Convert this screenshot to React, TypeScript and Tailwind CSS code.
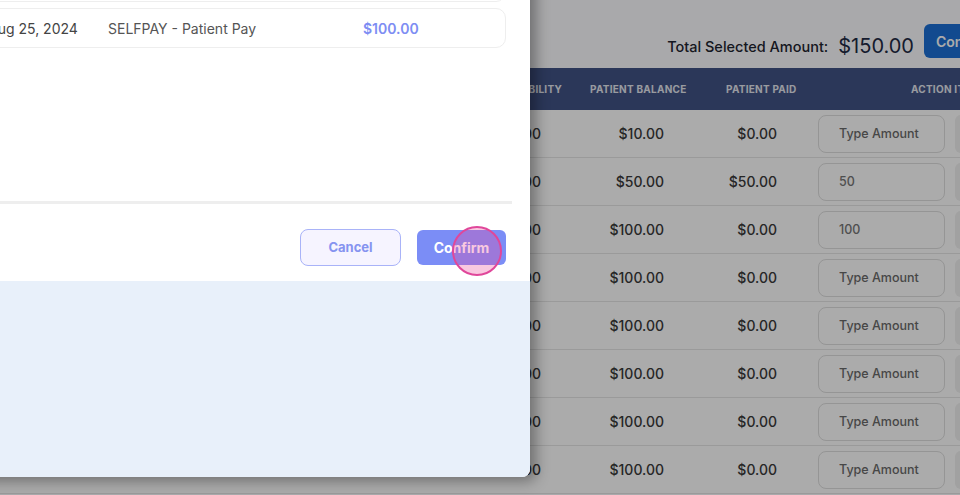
import React from 'react';

const rows = [
  { resp: '$10.00', balance: '$10.00', paid: '$0.00', value: '' },
  { resp: '$100.00', balance: '$50.00', paid: '$50.00', value: '50' },
  { resp: '$100.00', balance: '$100.00', paid: '$0.00', value: '100' },
  { resp: '$100.00', balance: '$100.00', paid: '$0.00', value: '' },
  { resp: '$100.00', balance: '$100.00', paid: '$0.00', value: '' },
  { resp: '$100.00', balance: '$100.00', paid: '$0.00', value: '' },
  { resp: '$100.00', balance: '$100.00', paid: '$0.00', value: '' },
  { resp: '$100.00', balance: '$100.00', paid: '$0.00', value: '' },
];

const payments = [
  { date: 'Aug 18, 2024', payer: 'SELFPAY - Patient Pay', amount: '$50.00' },
  { date: 'Aug 25, 2024', payer: 'SELFPAY - Patient Pay', amount: '$100.00' },
];

export default function App() {
  return (
    <div
      className="relative w-[960px] h-[495px] overflow-hidden bg-[#fcfdff]"
      style={{ fontFamily: 'Inter, "Noto Sans", sans-serif' }}
    >
      {/* Page behind the dialog */}
      <div className="w-[1040px]">
        <div className="flex justify-end items-end pt-6">
          <span className="text-[14.5px] font-medium text-[#1f2430] pb-[4px] leading-none">Total Selected Amount:</span>
          <span className="ml-[10px] text-[20px] font-normal text-[#1f2a44] pb-[2px] leading-none">$150.00</span>
          <button className="ml-[10px] w-[116px] h-[34px] rounded-md bg-[#1b6fd5] text-white text-[14px] font-semibold text-left pl-[12px]">
            Confirm
          </button>
        </div>

        <div className="mt-[10px]">
          <div className="grid grid-cols-[460px_106px_134px_106px_234px] h-[42px] items-center bg-[#405285] text-[10px] font-bold uppercase tracking-wide text-[#e4e7ef]">
            <div className="pl-6"></div>
            <div className="text-right pr-[4px]">Responsibility</div>
            <div className="pl-6">Patient Balance</div>
            <div className="pl-[26px]">Patient Paid</div>
            <div className="pl-[105px]">Action Items</div>
          </div>
          {rows.map((r, i) => (
            <div
              key={i}
              className="grid grid-cols-[460px_106px_134px_106px_234px] h-[48px] items-center bg-white border-b border-[#e6e6e6] text-[14px] font-medium text-[#3a3a3a]"
            >
              <div />
              <div className="text-right pr-[25px]">{r.resp}</div>
              <div className="text-right pr-[36px]">{r.balance}</div>
              <div className="text-right pr-[29px]">{r.paid}</div>
              <div className="flex items-center gap-[10px] pl-3">
                <input
                  readOnly
                  value={r.value}
                  placeholder="Type Amount"
                  className="w-[127px] h-[38px] rounded-lg border border-[#dedede] bg-white pl-5 text-[12.5px] text-[#777] placeholder:text-[#6a6a6a] outline-none"
                />
                <div className="w-[60px] h-[38px] rounded-md bg-[#f0f0f0]" />
              </div>
            </div>
          ))}
        </div>
      </div>

      {/* Overlay */}
      <div className="absolute inset-0 bg-black/[0.33]" />

      {/* Dialog */}
      <div className="absolute left-[-230px] top-[-60px] w-[760px] h-[537px] flex flex-col bg-white rounded-br-lg overflow-hidden shadow-[6px_4px_14px_rgba(0,0,0,0.35)]">
        <div className="h-[264px] mr-[18px] pl-6 pr-[6px] pt-[22px] flex flex-col gap-1.5 border-b-[3px] border-[#eeeeee]">
          {payments.map((p, i) => (
            <div
              key={i}
              className="grid grid-cols-[177px_120px_255px_1fr] h-[40px] items-center pl-4 rounded-[10px] border border-[#eeeeee] text-[14px]"
            >
              <div className="text-[#444]">#1024{i}</div>
              <div className="text-[#444]">{p.date}</div>
              <div className="text-[#555]">{p.payer}</div>
              <div className="font-semibold text-[#7d8df3]">{p.amount}</div>
            </div>
          ))}
        </div>
        <div className="h-[77px] flex items-start justify-end gap-4 pr-6 pt-[25px]">
          <button className="w-[101px] h-[37px] rounded-lg border border-[#a9b3f8] bg-[#f6f4ff] text-[13px] font-bold text-[#8593f0]">
            Cancel
          </button>
          <button className="mt-[1px] w-[89px] h-[35px] rounded-md bg-[#7b8df6] text-[14px] font-bold text-white">
            Confirm
          </button>
        </div>
        <div className="flex-1 bg-[#e8f0fa]" />
      </div>

      {/* Click highlight */}
      <div className="absolute left-[452px] top-[226px] w-[50px] h-[50px] rounded-full border-2 border-[#e0479a] bg-[#ec4899]/30" />
    </div>
  );
}
